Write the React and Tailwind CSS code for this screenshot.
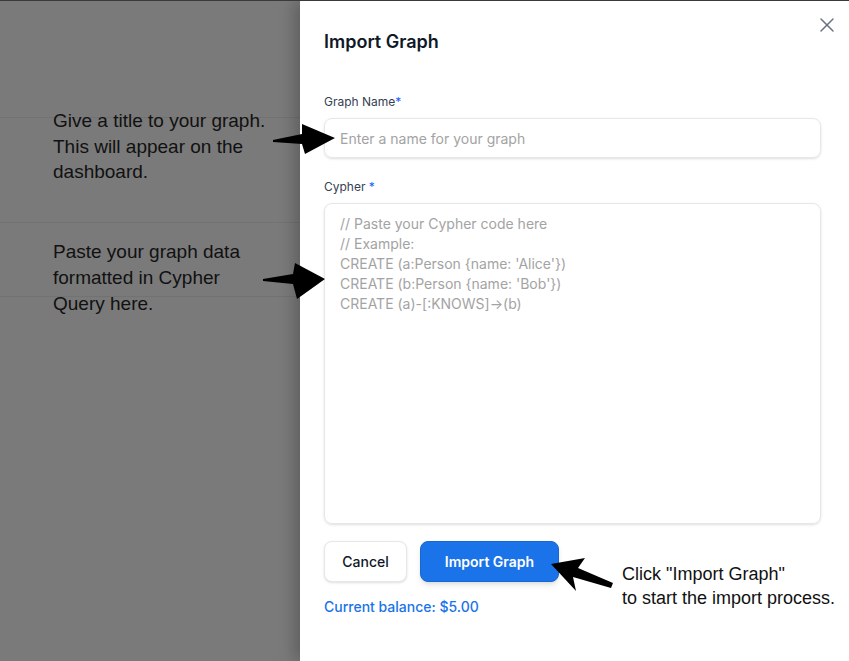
import React from 'react';
import { X } from 'lucide-react';

const placeholderCypher = `// Paste your Cypher code here
// Example:
CREATE (a:Person {name: 'Alice'})
CREATE (b:Person {name: 'Bob'})
CREATE (a)-[:KNOWS]→(b)`;

function Arrows() {
  return (
    <svg className="absolute inset-0 pointer-events-none" width="849" height="661" viewBox="0 0 849 661">
      <polygon fill="#000" points="273,139 302,133 302,123 335,137 305,153 302,143 273,141" />
      <polygon fill="#000" points="263,278 293,273 295,262 325,278 297,298 293,283 263,280" />
      <polygon fill="#000" points="551,563 585,557 578,567 613,582 611,587 573,576 576,590" />
    </svg>
  );
}

export default function App() {
  return (
    <div className="relative w-[849px] h-[661px] overflow-hidden border-t border-[#3a3a3a] bg-[#7a7a7a] flex" style={{ fontFamily: 'Inter, "Noto Sans", sans-serif' }}>
      {/* dimmed page behind */}
      <div className="flex-1 flex flex-col">
        <div className="h-[117px] border-b border-[#727272]" />
        <div className="h-[105px] border-b border-[#727272]" />
        <div className="h-[74px] border-b border-[#727272]" />
      </div>

      {/* drawer */}
      <div className="w-[549px] h-full bg-white pl-6 pr-[28px] relative shadow-[-6px_0_14px_rgba(0,0,0,0.22)]">
        <button className="absolute right-[10px] top-[12px] text-gray-500">
          <X size={24} strokeWidth={1.5} />
        </button>
        <h2 className="pt-[27px] text-lg leading-7 font-semibold text-gray-900">Import Graph</h2>

        <div className="mt-[38px]">
          <label className="block text-xs leading-4 text-gray-700 mb-2">
            Graph Name<span className="text-blue-600">*</span>
          </label>
          <input
            className="w-full h-10 rounded-lg border border-gray-200 shadow-sm px-[15px] text-sm outline-none placeholder:text-[#a3a3a3]"
            placeholder="Enter a name for your graph"
          />
        </div>

        <div className="mt-[21px]">
          <label className="block text-xs leading-4 text-gray-700 mb-2">
            Cypher <span className="text-blue-600">*</span>
          </label>
          <textarea
            className="w-full h-[321px] resize-none rounded-lg border border-gray-200 shadow-sm px-[15px] pt-[10px] text-sm leading-5 outline-none placeholder:text-[#a3a3a3]"
            placeholder={placeholderCypher}
          />
        </div>

        <div className="mt-[11px] flex gap-[13px]">
          <button className="h-[41px] w-[83px] rounded-lg border border-gray-200 bg-white text-sm font-medium text-gray-900 shadow-sm">
            Cancel
          </button>
          <button className="h-[41px] w-[139px] rounded-lg border border-[#1967d2] bg-[#1a73e8] text-sm font-semibold text-white shadow-md">
            Import Graph
          </button>
        </div>
        <p className="mt-[15px] text-sm leading-5 font-medium text-[#1a73e8]">Current balance: $5.00</p>
      </div>

      {/* annotations */}
      <div className="absolute left-[53px] top-[107px] text-[19px] leading-[25.5px] text-[#111]" style={{ fontFamily: '"Liberation Sans", Arial, sans-serif' }}>
        Give a title to your graph.<br />This will appear on the<br />dashboard.
      </div>
      <div className="absolute left-[53px] top-[238px] text-[19px] leading-[26px] text-[#111]" style={{ fontFamily: '"Liberation Sans", Arial, sans-serif' }}>
        Paste your graph data<br />formatted in Cypher<br />Query here.
      </div>
      <div className="absolute left-[622px] top-[561px] text-[18px] leading-[24px] text-[#111]" style={{ fontFamily: '"Liberation Sans", Arial, sans-serif' }}>
        Click "Import Graph"<br />to start the import process.
      </div>
      <Arrows />
    </div>
  );
}
